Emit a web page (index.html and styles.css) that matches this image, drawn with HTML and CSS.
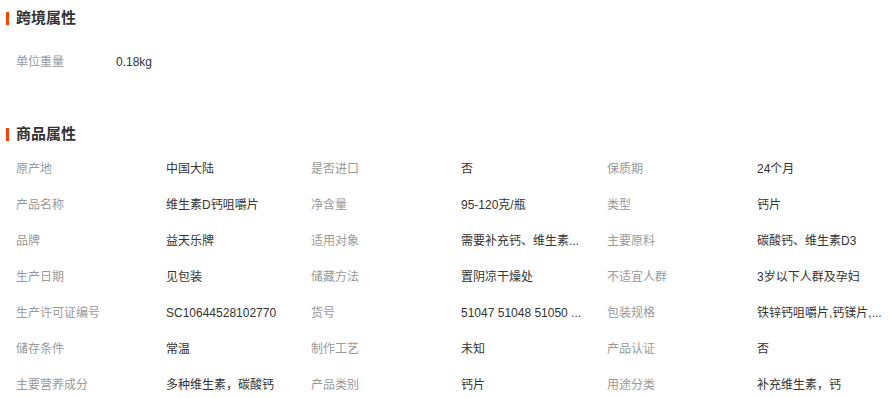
FILE: index.html
```html
<!DOCTYPE html>
<html lang="zh-CN">
<head>
<meta charset="utf-8">
<title>属性</title>
<link rel="stylesheet" href="styles.css">
</head>
<body>
<section class="block block-cross">
  <h2 class="title"><span class="bar"></span>跨境属性</h2>
  <div class="grid-cross">
    <div class="label">单位重量</div><div class="value">0.18kg</div>
  </div>
</section>
<section class="block block-goods">
  <h2 class="title"><span class="bar"></span>商品属性</h2>
  <div class="grid-goods">
    <div class="label">原产地</div><div class="value">中国大陆</div>
    <div class="label">是否进口</div><div class="value">否</div>
    <div class="label">保质期</div><div class="value">24个月</div>

    <div class="label">产品名称</div><div class="value">维生素D钙咀嚼片</div>
    <div class="label">净含量</div><div class="value">95-120克/瓶</div>
    <div class="label">类型</div><div class="value">钙片</div>

    <div class="label">品牌</div><div class="value">益天乐牌</div>
    <div class="label">适用对象</div><div class="value">需要补充钙、维生素...</div>
    <div class="label">主要原料</div><div class="value">碳酸钙、维生素D3</div>

    <div class="label">生产日期</div><div class="value">见包装</div>
    <div class="label">储藏方法</div><div class="value">置阴凉干燥处</div>
    <div class="label">不适宜人群</div><div class="value">3岁以下人群及孕妇</div>

    <div class="label">生产许可证编号</div><div class="value">SC10644528102770</div>
    <div class="label">货号</div><div class="value">51047 51048 51050 ...</div>
    <div class="label">包装规格</div><div class="value">铁锌钙咀嚼片,钙镁片,...</div>

    <div class="label">储存条件</div><div class="value">常温</div>
    <div class="label">制作工艺</div><div class="value">未知</div>
    <div class="label">产品认证</div><div class="value">否</div>

    <div class="label">主要营养成分</div><div class="value">多种维生素，碳酸钙</div>
    <div class="label">产品类别</div><div class="value">钙片</div>
    <div class="label">用途分类</div><div class="value">补充维生素，钙</div>
  </div>
</section>
</body>
</html>
```
FILE: styles.css
```css
html, body {
  margin: 0;
  padding: 0;
  background: #fff;
}
body {
  font-family: "Liberation Sans", Arial, "Noto Sans CJK SC", sans-serif;
  font-size: 12px;
  color: #333;
  width: 889px;
  overflow: hidden;
}
.block {
  display: flex;
  flex-direction: column;
}
.block-cross {
  padding-top: 10px;
}
.block-goods {
  padding-top: 46px;
}
.title {
  display: flex;
  align-items: center;
  gap: 7px;
  margin: 0;
  padding-left: 6px;
  height: 16px;
  font-size: 15px;
  line-height: 16px;
  font-weight: bold;
  color: #333;
}
.bar {
  width: 3px;
  height: 13px;
  background: #ff4400;
}
.grid-cross {
  display: grid;
  grid-template-columns: 100px 1fr;
  padding-left: 16px;
  margin-top: 18px;
}
.grid-goods {
  display: grid;
  grid-template-columns: 150px 145px 150px 146px 150px 1fr;
  padding-left: 16px;
  margin-top: 9px;
}
.label, .value {
  height: 36px;
  line-height: 36px;
  white-space: nowrap;
  overflow: hidden;
}
.label {
  color: #999;
}
.value {
  color: #333;
}
```
